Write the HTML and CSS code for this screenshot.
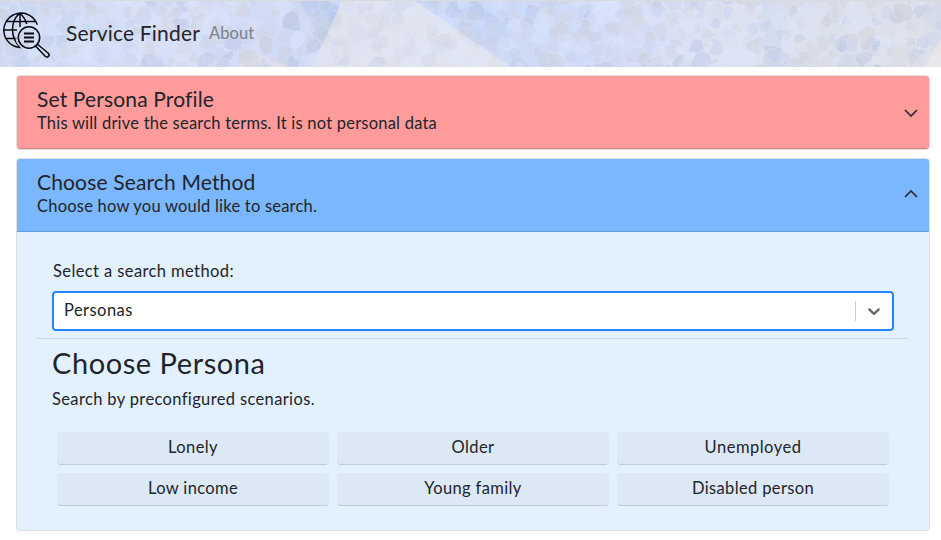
FILE: index.html
```html
<!DOCTYPE html>
<html lang="en">
<head>
<meta charset="utf-8">
<title>Service Finder</title>
<link rel="stylesheet" href="styles.css">
</head>
<body>
<header class="navbar">
  <svg class="texture" viewBox="0 0 941 66" preserveAspectRatio="none" aria-hidden="true">
    <defs>
      <linearGradient id="sky" x1="0" x2="1">
        <stop offset="0" stop-color="#cfdcf6"/><stop offset=".2" stop-color="#d8dff7"/>
        <stop offset=".35" stop-color="#cbd8f5"/><stop offset=".6" stop-color="#cedaf9"/>
        <stop offset=".75" stop-color="#dde2f3"/><stop offset="1" stop-color="#dcdfe6"/>
      </linearGradient>
      <filter id="rough" x="0" y="0" width="100%" height="100%">
        <feTurbulence type="fractalNoise" baseFrequency=".07" numOctaves="2" seed="4"/>
        <feDisplacementMap in="SourceGraphic" scale="9" xChannelSelector="R" yChannelSelector="G"/>
        <feGaussianBlur stdDeviation=".5"/>
      </filter>
    </defs>
    <rect width="941" height="66" fill="url(#sky)"/>
    <path d="M342 0H415L510 66H312Z" fill="#e5e6ee" opacity=".8"/>
    <path d="M245 47L292 66H239Z" fill="#e4e1e8" opacity=".7"/>
    <path d="M300 0H342L322 44Z" fill="#b5cbf3" opacity=".7"/>
    <path d="M415 0H475L515 32L482 44Z" fill="#bdd1fa" opacity=".6"/>
    <path d="M762 0H790L775 66H768Z" fill="#cfdcf0" opacity=".7"/>
    <g id="stones" filter="url(#rough)" opacity=".75"></g>
    <path d="M342 0H415L510 66H312Z" fill="#e5e6ee" opacity=".3"/>
    <path d="M941 38L924 66H941Z" fill="#eee9e8" opacity=".7"/>
  </svg>
  <svg class="logo" viewBox="0 0 50 50" fill="none" stroke="#080b12" stroke-width="1.5">
    <path d="M37.3 17.7A17.2 17.2 0 1 0 20 40.5C15 35 12.5 29 12.5 23C12.5 16 15 10 20 6.2C23 9 25.6 12.7 26.7 17M20 6.2V20M3 23H17M6 14.5H35M5.5 31.5H17"/>
    <circle cx="29" cy="30.5" r="10.7"/>
    <circle cx="29" cy="30.5" r="12.9" stroke="#dce4f5" stroke-width=".8"/>
    <path d="M24 26.5H34M24 30.5H34M24 34.5H34" stroke-width="1.9"/>
    <path d="M36.2 38.8L37.5 37.2L48.3 46.2C50.5 48.6 47.4 51.3 45.2 49.3L36 39.5Z"/>
  </svg>
  <span class="brand">Service Finder</span>
  <a class="about">About</a>
</header>
<main class="accordion">
  <section class="card">
    <div class="card-header red">
      <div><h2 class="title">Set Persona Profile</h2><p class="sub">This will drive the search terms. It is not personal data</p></div>
      <svg class="chev" viewBox="0 0 16 16"><path d="M2 5l6 6 6-6"/></svg>
    </div>
  </section>
  <section class="card">
    <div class="card-header blue">
      <div><h2 class="title">Choose Search Method</h2><p class="sub">Choose how you would like to search.</p></div>
      <svg class="chev up" viewBox="0 0 16 16"><path d="M2 11l6-6 6 6"/></svg>
    </div>
    <div class="card-body">
      <div class="field">
        <div class="label">Select a search method:</div>
        <div class="select">
          <span class="value">Personas</span>
          <span class="divider"></span>
          <svg class="caret" viewBox="0 0 20 20" width="20" height="20"><path d="M4.516 7.548c.436-.446 1.043-.481 1.576 0L10 11.295l3.908-3.747c.533-.481 1.141-.446 1.574 0 .436.445.408 1.197 0 1.615-.406.418-4.695 4.502-4.695 4.502a1.095 1.095 0 0 1-1.576 0S4.924 9.581 4.516 9.163s-.436-1.17 0-1.615z"/></svg>
        </div>
      </div>
      <div class="persona">
        <h1 class="heading">Choose Persona</h1>
        <p class="lead">Search by preconfigured scenarios.</p>
        <div class="grid">
          <button>Lonely</button><button>Older</button><button class="wide">Unemployed</button>
          <button>Low income</button><button>Young family</button><button>Disabled person</button>
        </div>
      </div>
    </div>
  </section>
</main>
<script src="texture.js"></script>
</body>
</html>
```
FILE: styles.css
```css
* { box-sizing: border-box; }
body { margin: 0; background: #fff; color: #212529; font: 16.5px/24px Lato, "Open Sans", sans-serif; }
h1, h2, p { margin: 0; font-weight: 400; }
.navbar { position: relative; height: 67px; border-top: 1px solid #d9dbde; display: flex; align-items: center; padding-bottom: 2px; overflow: hidden; }
.texture { position: absolute; inset: 0; width: 100%; height: 66px; }
.logo { position: relative; width: 50px; height: 50px; margin: 0 16px 0 0; top: -1px; overflow: visible; }
.brand { position: relative; font-size: 21px; line-height: 30px; width: 143px; white-space: nowrap; letter-spacing: .2px; }
.about { position: relative; color: #7c808b; letter-spacing: .1px; }
.accordion { padding: 8px 11px 0 16px; display: grid; gap: 8px; }
.card { border: 1px solid rgba(0,0,0,.125); border-radius: 4px; overflow: hidden; background: #e3f1ff; background-clip: padding-box; }
.card-header { height: 73px; padding: 11px 10px 12px 20px; display: flex; justify-content: space-between; border-bottom: 1px solid rgba(0,0,0,.15); }
.card:first-child { height: 75px; }
.red { background: #ff9b9b; }
.blue { background: #7ab7ff; }
.title { font-size: 21px; line-height: 24px; letter-spacing: .15px; white-space: nowrap; }
.sub { line-height: 24px; white-space: nowrap; letter-spacing: .22px; }
.chev { width: 16px; height: 16px; margin-top: 18px; fill: none; stroke: #2b2b33; stroke-width: 1.7; }
.up { margin-top: 16px; }
.card-body { padding: 20px; height: 298px; }
.field { padding: 7px 15px; height: 87px; border-bottom: 1px solid #cad8e6; }
.label { padding-left: 1px; margin-bottom: 8px; letter-spacing: .4px; }
.select { height: 40px; border: 2px solid #2684ff; border-radius: 4px; background: #fff; display: flex; align-items: center; padding: 0 8px 0 10px; }
.value { flex: 1; letter-spacing: .45px; padding-bottom: 2px; }
.divider { width: 1px; height: 20px; background: #ccc; margin-right: 8px; }
.caret { fill: #666; }
.persona { padding: 7px 15px 0; }
.heading { font-size: 29px; line-height: 34px; letter-spacing: .55px; }
.lead { margin-top: 7px; letter-spacing: .36px; }
.grid { display: grid; grid-template-columns: repeat(3, 272px); gap: 8px; padding: 21px 5px 0; }
button { height: 33px; border: 0; border-bottom: 1px solid #bfcbda; border-radius: 4px; background: #dce8f6; color: #212529; font: inherit; letter-spacing: .37px; padding: 0 0 2px; }
.wide { letter-spacing: .5px; }
```
FILE: texture.js
```js
// Pale mosaic of irregular stones behind the navigation bar.
let seed = 41;
const rand = () => (seed = (seed * 16807) % 2147483647) / 2147483647;
const tones = ['#b4c0df', '#c8cad3', '#e0e9ff', '#c4cfeb', '#d0d1d9', '#dde6fb', '#d5d5dc'];
let out = '';
for (let y = -4; y < 76; y += 12) {
  for (let x = -8; x < 955; x += 13) {
    const cx = x + rand() * 11, cy = y + rand() * 10, r = 5 + rand() * 7;
    const pts = [];
    for (let i = 0; i < 7; i++) {
      const a = i * Math.PI * 2 / 7, d = r * (.65 + rand() * .55);
      pts.push((cx + Math.cos(a) * d).toFixed(1) + ',' + (cy + Math.sin(a) * d).toFixed(1));
    }
    out += `<polygon points="${pts.join(' ')}" fill="${tones[Math.floor(rand() * tones.length)]}" stroke="#e2eaff" stroke-width=".8" opacity="${(.25 + rand() * .35).toFixed(2)}"/>`;
  }
}
document.getElementById('stones').innerHTML = out;
```
